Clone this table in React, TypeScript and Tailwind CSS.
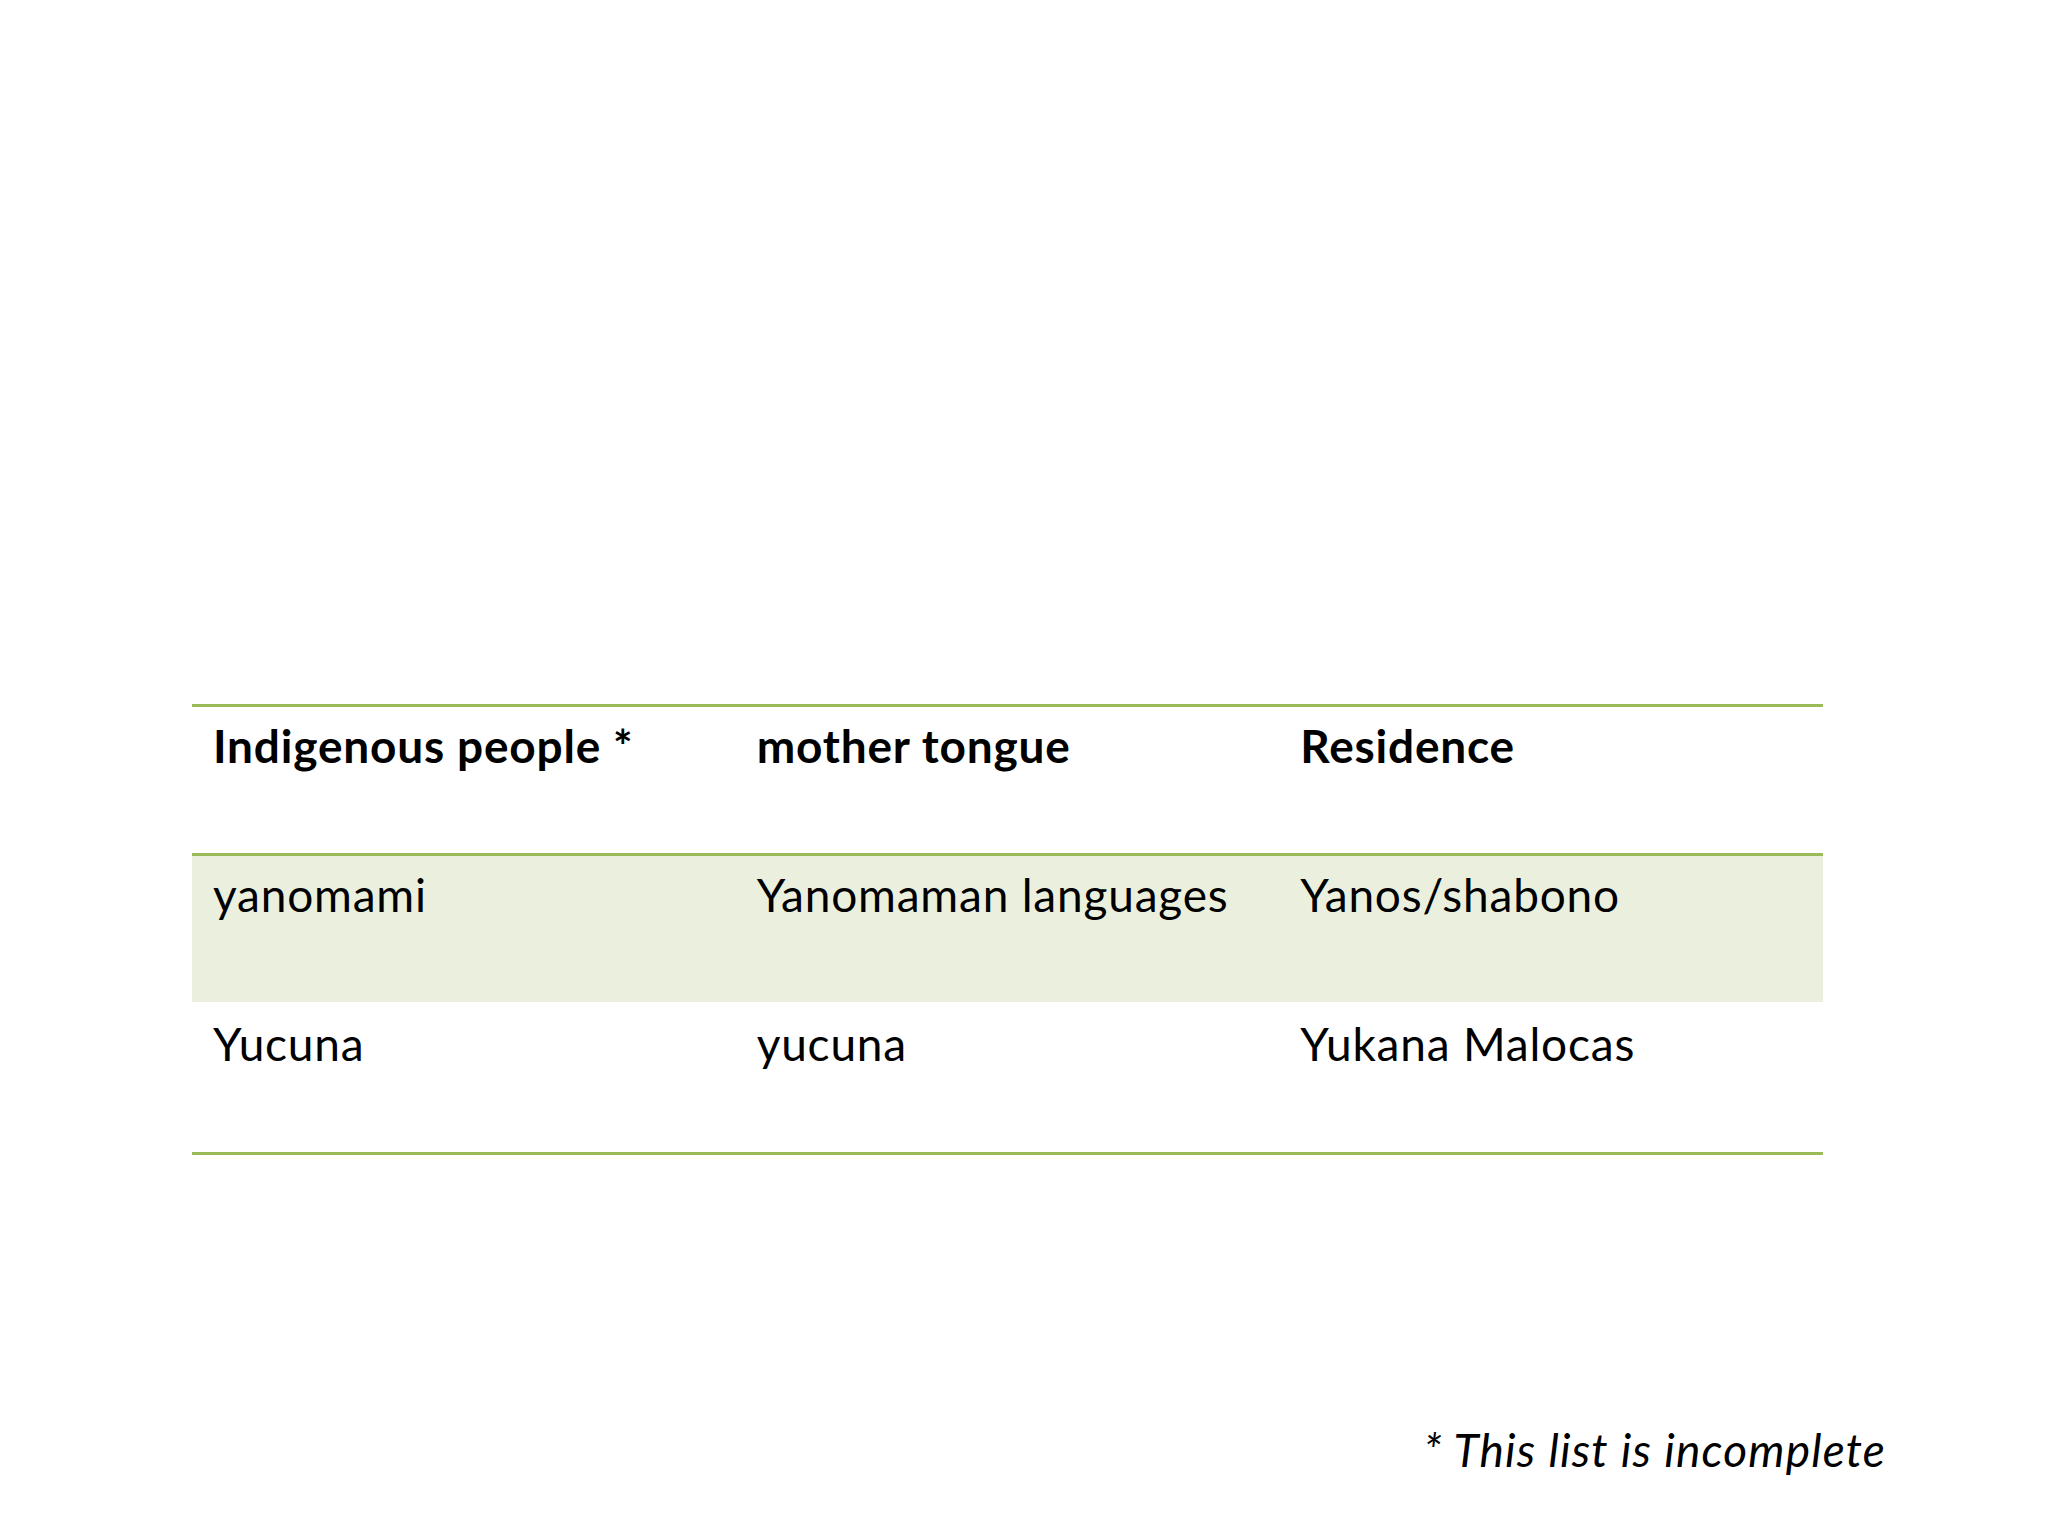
const header = ["Indigenous people *", "mother tongue", "Residence"];

const rows = [
  { cells: ["yanomami", "Yanomaman languages", "Yanos/shabono"], shaded: true },
  { cells: ["Yucuna", "yucuna", "Yukana Malocas"], shaded: false },
];

export default function App() {
  return (
    <div className="w-[2048px] h-[1536px] bg-white text-black font-['Lato',sans-serif] flex flex-col pt-[704px] px-[192px]">
      {/* table */}
      <div className="w-[1631px] flex flex-col">
        <div className="grid grid-cols-3 h-[149px] border-t-[3px] border-[#9bbb59] pt-[12px]">
          {header.map((h) => (
            <div key={h} className="pl-[21px] text-[46px] leading-[54px] tracking-[0.8px] font-bold">
              {h}
            </div>
          ))}
        </div>
        <div className="grid grid-cols-3 h-[149px] border-t-[3px] border-[#9bbb59] bg-[#ebf0de] pt-[12px]">
          {rows[0].cells.map((c) => (
            <div key={c} className="pl-[21px] text-[46px] leading-[54px] tracking-[0.8px]">
              {c}
            </div>
          ))}
        </div>
        <div className="grid grid-cols-3 h-[153px] border-b-[3px] border-[#9bbb59] pt-[15px]">
          {rows[1].cells.map((c) => (
            <div key={c} className="pl-[21px] text-[46px] leading-[54px] tracking-[0.8px]">
              {c}
            </div>
          ))}
        </div>
      </div>

      {/* footnote */}
      <div className="mt-[268px] w-[1694px] text-right text-[46px] leading-[54px] tracking-[1.2px] italic">
        * This list is incomplete
      </div>
    </div>
  );
}
